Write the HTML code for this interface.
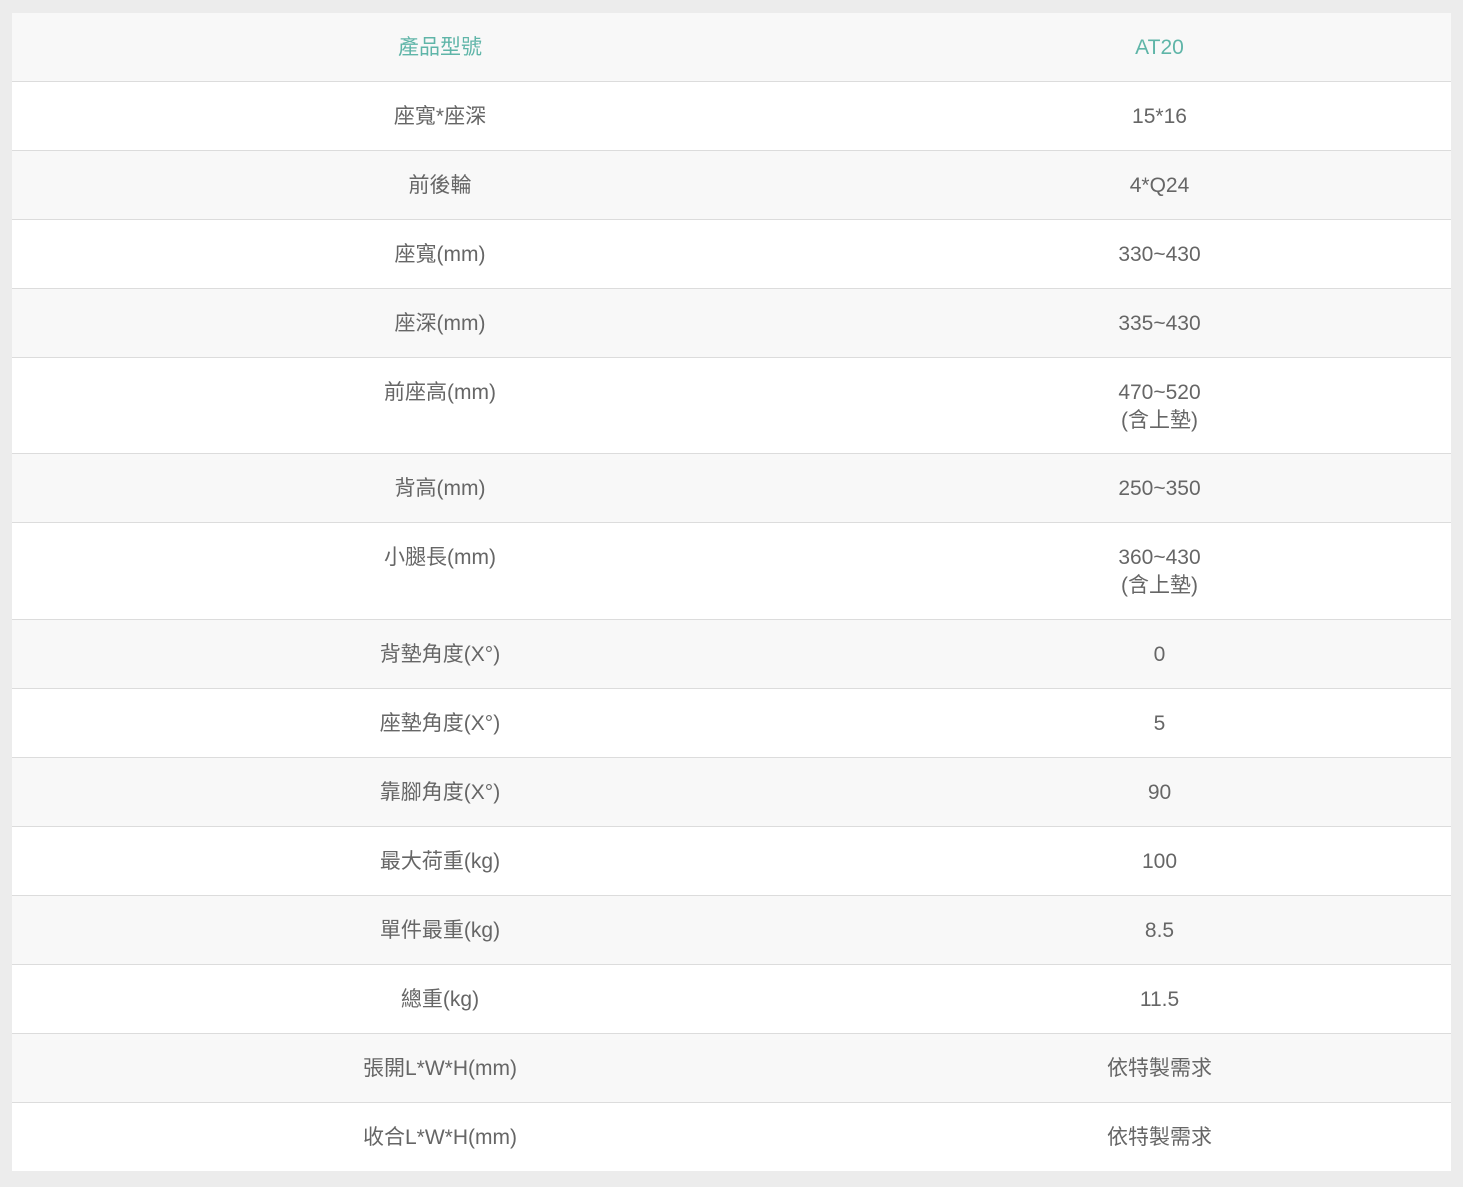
<!DOCTYPE html>
<html><head><meta charset="utf-8"><style>
html,body{margin:0;padding:0;background:#ececec;}
body{width:1463px;height:1187px;overflow:hidden;}
table{position:absolute;left:12px;top:13px;width:1439px;border-collapse:collapse;background:#fff;
font-family:"Liberation Sans","Noto Sans CJK TC",sans-serif;font-size:21px;color:#666;}
td{text-align:center;vertical-align:top;padding:21px 0 18px;line-height:28px;height:29px;box-sizing:content-box;}
td:first-child{width:856px;}
tr+tr td{border-top:1px solid #dcdcdc;}
tr:nth-child(odd){background:#f8f8f8;}
tr.h td{color:#5fb5a8;}
tr.x td{padding-bottom:19px;}
</style></head><body>
<table>
<tr class="h"><td>產品型號</td><td>AT20</td></tr>
<tr><td>座寬*座深</td><td>15*16</td></tr>
<tr><td>前後輪</td><td>4*Q24</td></tr>
<tr><td>座寬(mm)</td><td>330~430</td></tr>
<tr><td>座深(mm)</td><td>335~430</td></tr>
<tr><td>前座高(mm)</td><td>470~520<br>(含上墊)</td></tr>
<tr><td>背高(mm)</td><td>250~350</td></tr>
<tr class="x"><td>小腿長(mm)</td><td>360~430<br>(含上墊)</td></tr>
<tr><td>背墊角度(X°)</td><td>0</td></tr>
<tr><td>座墊角度(X°)</td><td>5</td></tr>
<tr><td>靠腳角度(X°)</td><td>90</td></tr>
<tr><td>最大荷重(kg)</td><td>100</td></tr>
<tr><td>單件最重(kg)</td><td>8.5</td></tr>
<tr><td>總重(kg)</td><td>11.5</td></tr>
<tr><td>張開L*W*H(mm)</td><td>依特製需求</td></tr>
<tr><td>收合L*W*H(mm)</td><td>依特製需求</td></tr>
</table>
</body></html>
